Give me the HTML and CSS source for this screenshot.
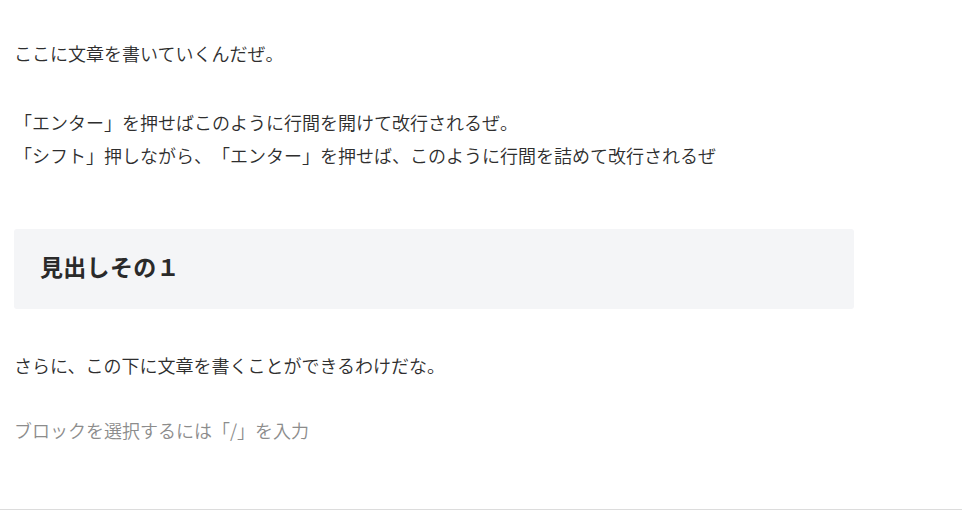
FILE: index.html
```html
<!DOCTYPE html>
<html lang="ja">
<head>
<meta charset="utf-8">
<title>editor</title>
<link rel="stylesheet" href="styles.css">
</head>
<body>
<div class="page">
  <main class="editor">
    <p class="para p1">ここに文章を書いていくんだぜ。</p>
    <p class="para p2">「エンター」を押せばこのように行間を開けて改行されるぜ。<br>「シフト」押しながら、「エンター」を押せば、このように行間を詰めて改行されるぜ</p>
    <h2 class="heading">見出しその１</h2>
    <p class="para p3">さらに、この下に文章を書くことができるわけだな。</p>
    <p class="para placeholder">ブロックを選択するには「/」を入力</p>
  </main>
  <div class="footer-line"></div>
</div>
</body>
</html>
```
FILE: styles.css
```css
html, body {
  margin: 0;
  padding: 0;
  background: #ffffff;
}
body {
  font-family: "Noto Sans CJK JP", "Noto Sans", sans-serif;
  color: #2e2e2e;
  text-spacing-trim: space-all;
}
.page {
  width: 962px;
  height: 521px;
  display: flex;
  flex-direction: column;
}
.editor {
  padding: 37px 0 0 14px;
  width: 854px;
  height: 472px;
  box-sizing: border-box;
  display: flex;
  flex-direction: column;
}
.para {
  margin: 0;
  font-size: 18px;
  font-weight: 350;
  line-height: 33px;
  padding-left: 0;
}
.p2 {
  margin-top: 36px;
}
.heading {
  margin: 57px 0 0 0;
  height: 80px;
  box-sizing: border-box;
  background: #f4f5f7;
  border-radius: 3px;
  padding: 0 0 7px 26px;
  display: flex;
  align-items: center;
  font-size: 23px;
  font-weight: 700;
  color: #2a2a2a;
  letter-spacing: 0.3px;
}
.p3 {
  margin-top: 40px;
}
.placeholder {
  margin-top: 32px;
  color: #8c8c8c;
}
.footer-line {
  margin-top: 37px;
  height: 1px;
  background: #dcdcdc;
  width: 962px;
}
```
